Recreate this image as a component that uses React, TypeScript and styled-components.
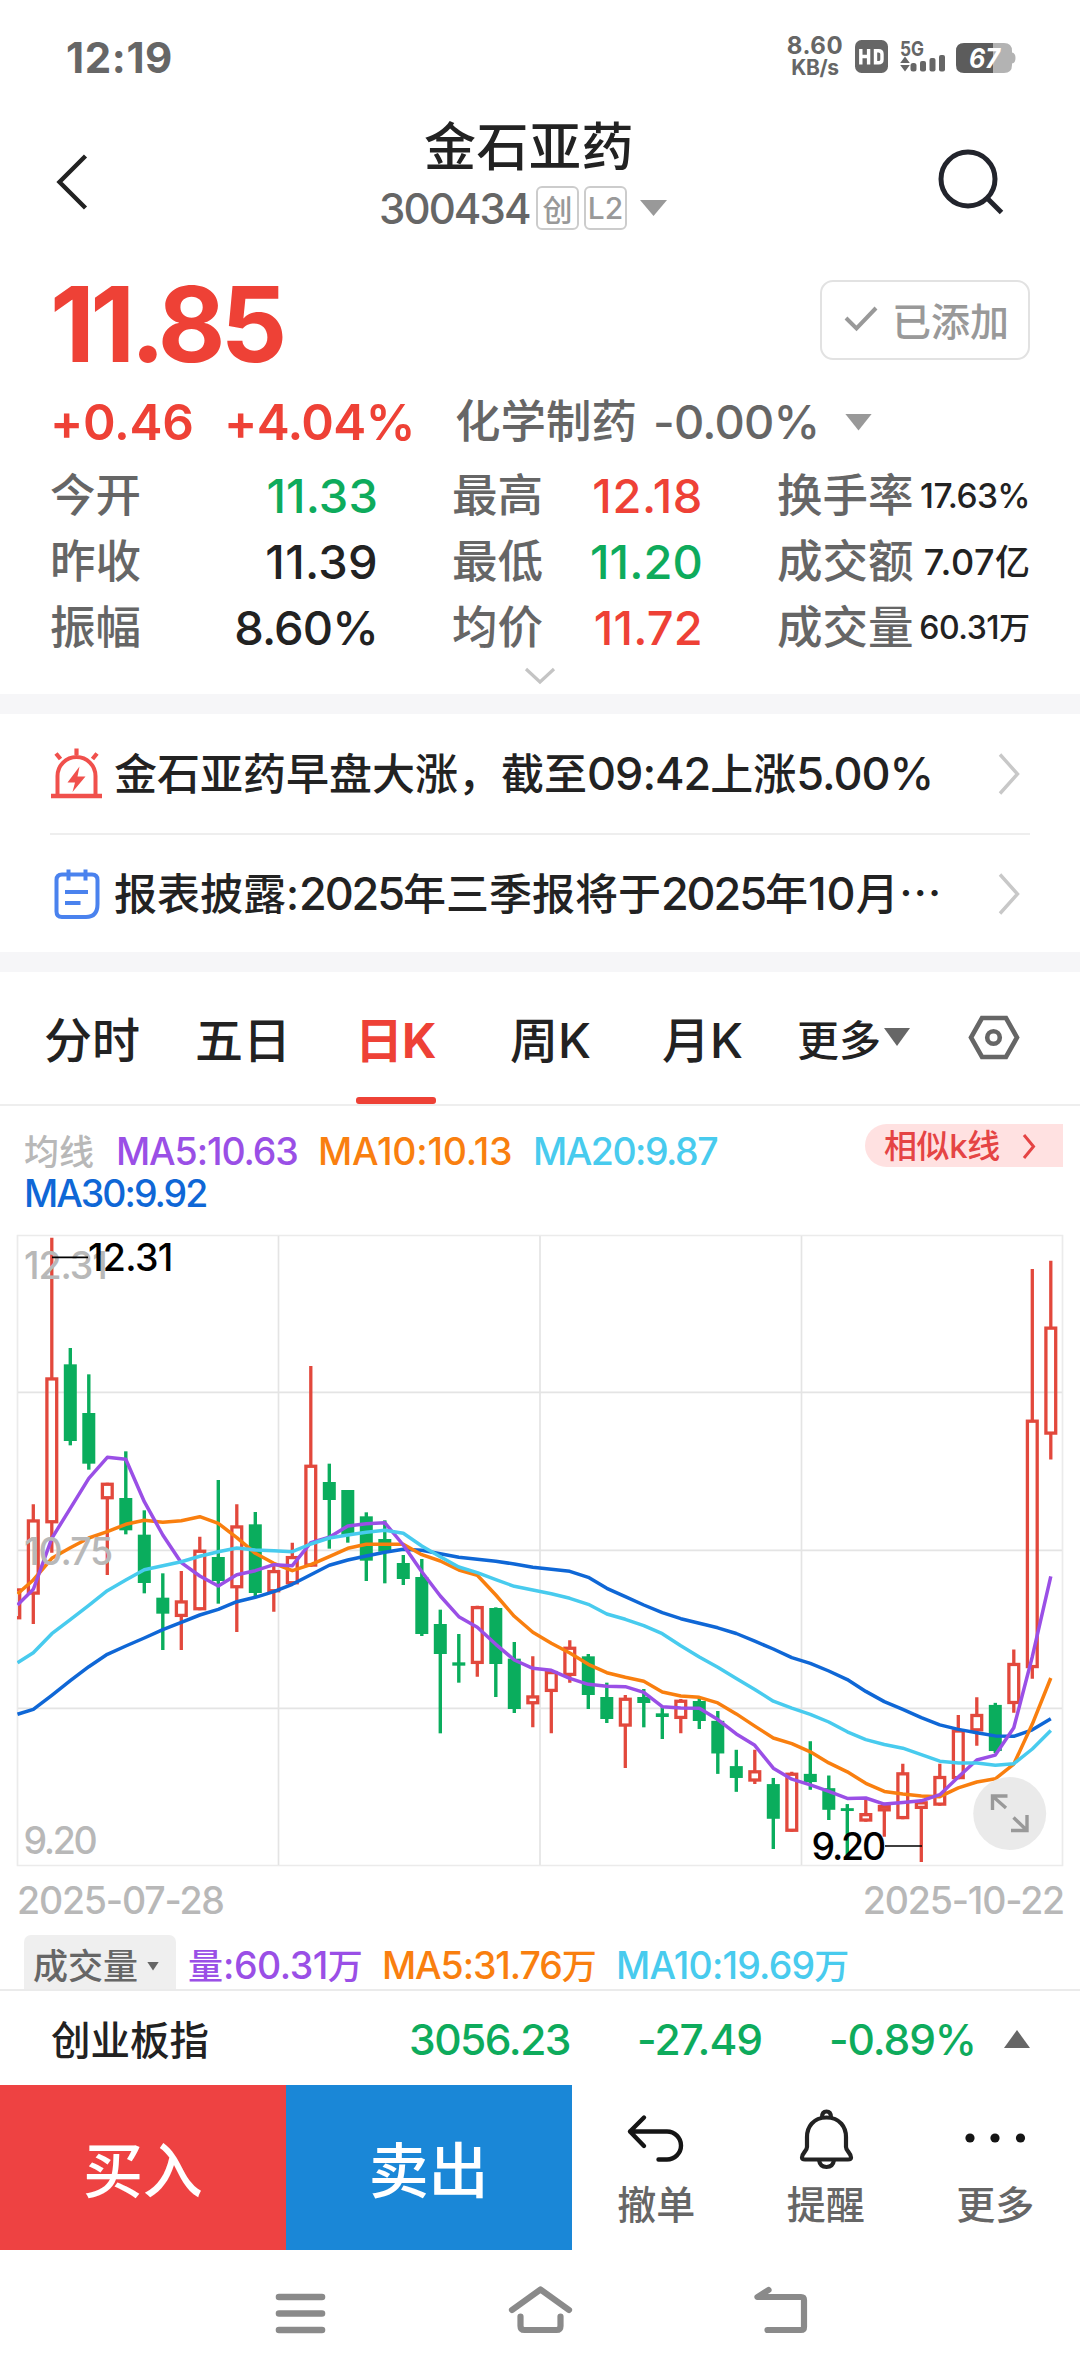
import React from 'react';
import styled, { createGlobalStyle } from 'styled-components';

const RED = '#ee4136';
const GREEN = '#0eab5c';
const INK = '#222222';
const GRAY = '#666666';
const MUTED = '#b8b8b8';
const PURPLE = '#9a4fe6';
const ORANGE = '#f97f0f';
const CYAN = '#48cbee';
const BLUE = '#0f67d6';

const GlobalStyle = createGlobalStyle`
  * { box-sizing: border-box; }
  body {
    margin: 0;
    background: #fff;
    color: ${INK};
    font-family: Inter, "Noto Sans CJK SC", sans-serif;
  }
  svg { display: block; }
`;

const Screen = styled.main`
  display: flex;
  flex-direction: column;
  width: 1080px;
  height: 2376px;
  overflow: hidden;
  background: #fff;
`;

/* Latin digits and letters, with their own size and tracking */
const Num = styled.span<{ $size?: number; $track?: number; $color?: string; $weight?: number }>`
  font-size: ${(p) => (p.$size ? `${p.$size}px` : 'inherit')};
  letter-spacing: ${(p) => p.$track ?? 0}px;
  color: ${(p) => p.$color ?? 'inherit'};
  font-weight: ${(p) => p.$weight ?? 'inherit'};
  white-space: nowrap;
`;

/* ---------- status bar ---------- */
const StatusBar = styled.div`
  display: flex;
  align-items: center;
  justify-content: space-between;
  height: 114px;
  padding: 0 64px 0 66px;
  color: ${GRAY};
`;
const Clock = styled.div`
  font-size: 42px;
  font-weight: 700;
  letter-spacing: 0.6px;
`;
const StatusIcons = styled.div`
  display: flex;
  align-items: center;
`;
const NetSpeed = styled.div`
  display: flex;
  flex-direction: column;
  align-items: center;
  width: 58px;
  margin-right: 11px;
  font-weight: 700;
  font-size: 24px;
  line-height: 22px;
  letter-spacing: 0.6px;
`;
const NetUnit = styled.span`
  font-size: 21px;
  letter-spacing: -0.4px;
`;

/* ---------- header ---------- */
const Header = styled.header`
  display: grid;
  grid-template-columns: 379px 322px 1fr;
  height: 137px;
`;
const BackCell = styled.div`
  padding: 38px 0 0 52px;
`;
const SearchCell = styled.div`
  display: flex;
  justify-content: flex-end;
  padding: 32px 74px 0 0;
`;
const Title = styled.h1`
  margin: 0;
  padding: 1px 0 0 45px;
  font-size: 52px;
  line-height: 66px;
  font-weight: 500;
  letter-spacing: 0.5px;
`;
const CodeRow = styled.div`
  display: flex;
  align-items: center;
  height: 54px;
  color: ${GRAY};
`;
const Code = styled.span`
  width: 157px;
  font-size: 42px;
  font-weight: 450;
  letter-spacing: -1.9px;
`;
const Badge = styled.span`
  display: flex;
  align-items: center;
  justify-content: center;
  width: 43px;
  height: 44px;
  margin-right: 5px;
  border: 2px solid #ccc;
  border-radius: 6px;
  color: #999;
  font-size: 30px;
  font-weight: 450;
`;
const Triangle = styled.i<{ $w: number; $h: number; $color: string; $up?: boolean; $left?: number }>`
  width: ${(p) => p.$w}px;
  height: ${(p) => p.$h}px;
  margin-left: ${(p) => p.$left ?? 0}px;
  background: ${(p) => p.$color};
  clip-path: ${(p) => (p.$up ? 'polygon(50% 0, 100% 100%, 0 100%)' : 'polygon(0 0, 100% 0, 50% 100%)')};
`;

/* ---------- quote ---------- */
const Quote = styled.section`
  height: 443px;
  padding: 24px 50px 0 50px;
`;
const PriceRow = styled.div`
  display: flex;
  justify-content: space-between;
  align-items: flex-start;
`;
const Price = styled.div`
  color: ${RED};
  font-size: 104px;
  line-height: 98px;
  font-weight: 700;
  letter-spacing: -4.6px;
`;
const AddedButton = styled.button`
  display: flex;
  align-items: center;
  width: 210px;
  height: 80px;
  margin-top: 5px;
  padding: 0 0 2px 22px;
  border: 2px solid #e2e2e2;
  border-radius: 13px;
  background: #fff;
  color: #999;
  font: 500 39px Inter, "Noto Sans CJK SC", sans-serif;
  gap: 14px;
`;
const ChangeRow = styled.div`
  display: grid;
  grid-template-columns: 174px 231px 198px 186px auto;
  align-items: center;
  height: 66px;
  margin-top: 16px;
  font-size: 45.5px;
  line-height: 66px;
  color: ${GRAY};
`;
const SectorName = styled.span`
  font-weight: 500;
`;
const Stats = styled.div`
  display: grid;
  grid-template-columns: 328px 251px 253px;
  column-gap: 74px;
  grid-auto-rows: 66px;
  margin-top: 8px;
`;
const Stat = styled.div`
  display: flex;
  justify-content: space-between;
  align-items: center;
  line-height: 66px;
  white-space: nowrap;
`;
const StatLabel = styled.span`
  color: ${GRAY};
  font-size: 45.5px;
  font-weight: 500;
`;
const StatValue = styled.span<{ $size: number; $track: number; $color: string }>`
  font-size: ${(p) => p.$size}px;
  letter-spacing: ${(p) => p.$track}px;
  color: ${(p) => p.$color};
  font-weight: 450;
`;
const Unit = styled.span<{ $size: number }>`
  font-size: ${(p) => p.$size}px;
  font-weight: 500;
  letter-spacing: 0;
`;
const Expand = styled.div`
  display: flex;
  justify-content: center;
  margin-top: 5px;
`;
const Divider = styled.div<{ $h: number }>`
  flex: none;
  height: ${(p) => p.$h}px;
  background: #f6f6f8;
`;

/* ---------- news ---------- */
const News = styled.section`
  height: 238px;
  padding: 0 50px;
`;
const NewsRow = styled.div<{ $h: number; $line?: boolean }>`
  display: flex;
  align-items: center;
  height: ${(p) => p.$h}px;
  border-bottom: ${(p) => (p.$line ? '2px solid #eeeeee' : 'none')};
`;
const NewsIcon = styled.div`
  width: 64px;
`;
const NewsText = styled.div`
  flex: 1;
  font-size: 43px;
  line-height: 60px;
  white-space: nowrap;
  font-weight: 500;
`;
const Ellipsis = styled.span`
  font-family: "Noto Sans CJK SC", sans-serif;
  font-size: 43px;
  line-height: 1;
`;
const ChevronCell = styled.div`
  padding-right: 9px;
`;

/* ---------- tabs ---------- */
const Tabs = styled.nav`
  display: grid;
  grid-template-columns: 151px 160px 155px 152px 135px 171px auto;
  height: 134px;
  padding-left: 44px;
  border-bottom: 2px solid #eeeeee;
`;
const Tab = styled.div<{ $active?: boolean }>`
  position: relative;
  display: flex;
  align-items: center;
  height: 134px;
  padding-bottom: 4px;
  color: ${(p) => (p.$active ? RED : INK)};
  font-size: 48px;
  font-weight: ${(p) => (p.$active ? 700 : 500)};
  letter-spacing: ${(p) => (p.$active ? -1 : 0)}px;
  &::after {
    content: "";
    display: ${(p) => (p.$active ? 'block' : 'none')};
    position: absolute;
    left: 1px;
    bottom: 2px;
    width: 80px;
    height: 7px;
    border-radius: 3px;
    background: ${RED};
  }
`;
const MoreTab = styled(Tab)`
  font-size: 42px;
  font-weight: 500;
`;

/* ---------- averages legend ---------- */
const Legend = styled.div`
  display: flex;
  justify-content: space-between;
  align-items: flex-start;
  height: 119px;
  padding: 18px 17px 0 24px;
`;
const LegendGrid = styled.div`
  display: grid;
  grid-template-columns: 92px 202px 215px 200px;
  grid-auto-rows: 42px;
  padding-top: 7px;
  line-height: 42px;
`;
const LegendItem = styled.span<{ $color: string; $track: number }>`
  color: ${(p) => p.$color};
  font-size: 37.5px;
  font-weight: 450;
  letter-spacing: ${(p) => p.$track}px;
  white-space: nowrap;
`;
const LegendName = styled.span`
  color: ${MUTED};
  font-size: 35px;
  font-weight: 500;
`;
const SimilarPill = styled.div`
  display: flex;
  align-items: center;
  gap: 22px;
  width: 198px;
  height: 43px;
  padding: 2px 0 0 19px;
  border-radius: 22px 0 0 22px;
  background: #ffe1e1;
  color: #e54444;
  font-size: 33px;
  font-weight: 500;
  line-height: 41px;
  letter-spacing: -0.4px;
  white-space: nowrap;
`;

/* ---------- chart ---------- */
const ChartBox = styled.div`
  height: 650px;
`;
const Dates = styled.div`
  display: flex;
  justify-content: space-between;
  height: 60px;
  padding: 0 16px 0 17px;
  color: ${MUTED};
  font-size: 37.5px;
  font-weight: 450;
  line-height: 52px;
  letter-spacing: -1.2px;
`;
const Indicators = styled.div`
  display: grid;
  grid-template-columns: 164px 194px 234px auto;
  height: 56px;
  padding-left: 24px;
  border-bottom: 2px solid #ebebeb;
  font-size: 35px;
  font-weight: 500;
  line-height: 62px;
`;
const IndicatorTab = styled.div`
  display: flex;
  align-items: center;
  width: 152px;
  height: 54px;
  padding: 8px 0 0 9px;
  border-radius: 7px 7px 0 0;
  background: #efefef;
  color: ${GRAY};
`;
const Indicator = styled.div<{ $color: string }>`
  color: ${(p) => p.$color};
  white-space: nowrap;
`;

/* ---------- bottom ---------- */
const IndexRow = styled.div`
  display: grid;
  grid-template-columns: 358px 228px 192px 175px auto;
  align-items: center;
  height: 94px;
  padding: 2px 0 0 51px;
`;
const IndexName = styled.span`
  padding-bottom: 4px;
  font-size: 39.5px;
  font-weight: 500;
`;
const TradeBar = styled.div`
  display: flex;
  height: 165px;
`;
const TradeButton = styled.button<{ $bg: string }>`
  width: 286px;
  height: 165px;
  padding: 0 0 2px;
  border: 0;
  background: ${(p) => p.$bg};
  color: #fff;
  font: 500 60px Inter, "Noto Sans CJK SC", sans-serif;
`;
const Actions = styled.div`
  display: grid;
  grid-template-columns: repeat(3, 169.5px);
`;
const Action = styled.div`
  display: flex;
  flex-direction: column;
  align-items: center;
  padding-top: 20px;
  color: ${GRAY};
  font-size: 39px;
  font-weight: 500;
  line-height: 52px;
`;
const ActionIcon = styled.div`
  height: 74px;
`;
const NavBar = styled.div`
  display: grid;
  grid-template-columns: 233px 230px auto;
  height: 126px;
  padding: 30px 0 0 272px;
`;

/* ---------- chart data ---------- */
type Candle = [high: number, top: number, bottom: number, low: number, up: 0 | 1];
const zone = (origin: number, scale: number, v: number) => origin + v / scale;
const candleZone = (origin: number, scale: number, rows: Candle[]): Candle[] =>
  rows.map(([h, t, b, l, u]) => [
    zone(origin, scale, h), zone(origin, scale, t), zone(origin, scale, b), zone(origin, scale, l), u,
  ]);
const candles: Candle[] = [
  ...candleZone(1220, 3, [
    [1105, 1105, 1198, 1198, 1], [853, 898, 1124, 1212, 1], [53, 472, 910, 998, 1], [384, 433, 663, 676, 0],
    [463, 579, 731, 749, 0], [788, 788, 838, 1065, 1], [694, 834, 931, 943, 0], [871, 944, 1089, 1120, 0],
    [1060, 1133, 1181, 1290, 0], [1053, 1141, 1191, 1290, 1], [950, 989, 1171, 1171, 1], [780, 1011, 1083, 1151, 0],
    [853, 916, 1105, 1236, 1], [876, 913, 1119, 1133, 0], [1035, 1050, 1117, 1175, 1], [968, 1008, 1093, 1093, 1],
    [438, 734, 1040, 1040, 1], [731, 786, 840, 986, 0], [810, 810, 945, 968, 0],
  ]),
  ...candleZone(1340, 3, [
    [517, 529, 662, 723, 0], [541, 597, 635, 730, 0], [645, 669, 717, 735, 0], [657, 711, 882, 888, 0],
    [809, 852, 942, 1180, 0], [882, 967, 977, 1028, 0], [797, 798, 972, 1010, 1], [802, 804, 972, 1071, 0],
    [906, 956, 1107, 1119, 0], [949, 1066, 1093, 1162, 1], [990, 993, 1056, 1180, 1], [901, 920, 1008, 1028, 1],
    [942, 949, 1065, 1107, 0], [1028, 1071, 1137, 1149, 0], [1065, 1073, 1160, 1284, 1], [1047, 1071, 1089, 1162, 0],
    [1100, 1120, 1131, 1197, 0], [1077, 1079, 1137, 1180, 1], [1071, 1083, 1143, 1167, 0],
  ]),
  ...candleZone(1220, 2.45, [
    [1203, 1227, 1307, 1357, 0], [1298, 1338, 1367, 1401, 0], [1298, 1348, 1376, 1382, 1], [1367, 1382, 1467, 1541, 0],
    [1352, 1354, 1499, 1499, 1], [1277, 1357, 1377, 1396, 0], [1361, 1392, 1445, 1470, 0], [1431, 1441, 1448, 1556, 0],
    [1420, 1453, 1474, 1474, 1], [1430, 1433, 1449, 1511, 1], [1332, 1353, 1468, 1468, 1], [1420, 1424, 1443, 1573, 1],
    [1332, 1362, 1435, 1435, 1], [1213, 1248, 1370, 1370, 1], [1169, 1210, 1253, 1288, 1], [1183, 1188, 1301, 1306, 0],
    [1052, 1085, 1186, 1207, 1], [120, 489, 1098, 1124, 1], [100, 261, 526, 587, 1],
  ]),
];
const candleX = (i: number) => 14.8 + 18.5 * i;

const line = (a: number[], b: number[], c: number[]) =>
  [...a.map((v) => zone(1220, 3, v)), ...b.map((v) => zone(1340, 3, v)), ...c.map((v) => zone(1220, 2.45, v))]
    .map((y, i) => `${i === 0 ? 17.5 : candleX(i).toFixed(1)},${y.toFixed(1)}`)
    .join(' ');

const averages = [
  { color: BLUE, points: line(
    [1483, 1468, 1426, 1382, 1340, 1303, 1278, 1254, 1229, 1207, 1185, 1168, 1145, 1132, 1115, 1093, 1064, 1036, 1020],
    [648, 637, 628, 631, 641, 652, 658, 664, 672, 682, 688, 694, 712, 745, 770, 795, 818, 836, 850],
    [999, 1013, 1032, 1051, 1072, 1086, 1105, 1126, 1155, 1180, 1199, 1219, 1237, 1248, 1256, 1264, 1265, 1249, 1222]) },
  { color: ORANGE, points: line(
    [1122, 1080, 1015, 983, 954, 935, 913, 901, 907, 902, 890, 910, 953, 1000, 1030, 1052, 1034, 1010, 985],
    [613, 613, 613, 644, 663, 690, 706, 765, 829, 877, 910, 939, 973, 998, 1012, 1024, 1056, 1068, 1072],
    [1183, 1210, 1240, 1269, 1283, 1303, 1330, 1352, 1380, 1400, 1406, 1411, 1413, 1391, 1377, 1369, 1333, 1235, 1122]) },
  { color: PURPLE, points: line(
    [1155, 1108, 955, 865, 775, 712, 718, 845, 945, 1028, 1068, 1098, 1064, 1052, 1034, 1037, 968, 952, 918],
    [551, 548, 615, 695, 768, 830, 862, 913, 960, 985, 991, 1015, 1033, 1039, 1040, 1057, 1100, 1104, 1105],
    [1224, 1259, 1287, 1343, 1370, 1384, 1400, 1417, 1416, 1431, 1427, 1423, 1408, 1365, 1323, 1311, 1244, 1070, 873]) },
  { color: CYAN, points: line(
    [1328, 1298, 1241, 1199, 1156, 1112, 1080, 1049, 1037, 1025, 1009, 995, 984, 990, 992, 995, 972, 954, 945],
    [577, 571, 580, 618, 650, 681, 698, 719, 739, 750, 761, 775, 793, 822, 838, 857, 881, 917, 951],
    [1096, 1123, 1150, 1179, 1196, 1211, 1230, 1254, 1273, 1285, 1294, 1310, 1326, 1330, 1330, 1336, 1332, 1296, 1251]) },
];

const AxisText = styled.text<{ $dark?: boolean }>`
  font-size: 37.5px;
  font-weight: 450;
  fill: ${(p) => (p.$dark ? '#000' : MUTED)};
`;

function CandleShape({ x, data }: { x: number; data: Candle }) {
  const [high, top, bottom, low, up] = data;
  if (!up) {
    return (
      <g fill="#0aad5d">
        <rect x={x - 1.7} y={high} width={3.4} height={low - high} />
        <rect x={x - 6.5} y={top} width={13} height={bottom - top} />
      </g>
    );
  }
  return (
    <g fill="none" stroke="#e2483c" strokeWidth={3.3}>
      <path d={`M${x} ${high}V${top + 1}M${x} ${bottom - 1}V${low}`} />
      <rect x={x - 4.9} y={top + 1.6} width={9.8} height={Math.max(bottom - top - 3.2, 1)} />
    </g>
  );
}

function Chart() {
  return (
    <svg width="1080" height="650" viewBox="0 1225 1080 650">
      <defs>
        <clipPath id="plot"><rect x="17" y="1235" width="1046" height="631" /></clipPath>
      </defs>
      <g stroke="#e4e4e4" strokeWidth="1.7" fill="none">
        <path d="M17.5 1235.5H1062.5V1865.5H17.5Z" stroke="#ebebeb" />
        <path d="M278.5 1236V1865M540 1236V1865M801.5 1236V1865M18 1392.3H1062M18 1550.3H1062M18 1708.3H1062" />
      </g>
      <g clipPath="url(#plot)">
        {candles.map((c, i) => <CandleShape key={i} x={candleX(i)} data={c} />)}
        {averages.map((a) => (
          <polyline key={a.color} points={a.points} fill="none" stroke={a.color} strokeWidth="3.5" strokeLinejoin="round" />
        ))}
      </g>
      <AxisText x="24" y="1278.5" letterSpacing="-1.1">12.31</AxisText>
      <AxisText x="24" y="1565" letterSpacing="-1.1">10.75</AxisText>
      <AxisText x="23.5" y="1853.5" letterSpacing="-2.4">9.20</AxisText>
      <path d="M52 1257.3H88M885 1846H922" stroke="#000" strokeWidth="1.7" />
      <AxisText $dark x="88" y="1271" letterSpacing="-0.7">12.31</AxisText>
      <AxisText $dark x="811.5" y="1860" letterSpacing="-2.2">9.20</AxisText>
      <circle cx="1009.7" cy="1813.5" r="36.5" fill="#e8e8e8" fillOpacity="0.93" />
      <path
        d="M992.5 1810V1796H1007.5M993 1796.5L1006 1808M1011 1830.5H1027V1815M1013.5 1817.5L1026.5 1830"
        fill="none" stroke="#999" strokeWidth="3.4"
      />
    </svg>
  );
}

function Chevron() {
  return (
    <svg width="24" height="44" viewBox="0 0 24 44" fill="none" stroke="#c8c8c8" strokeWidth="3.4">
      <path d="M3 2.5L20.5 22L3 41.5" />
    </svg>
  );
}

const stats: { label: string; value: string; unit?: string; size: number; track: number; color: string }[] = [
  { label: '今开', value: '11.33', size: 47, track: 0.1, color: GREEN },
  { label: '最高', value: '12.18', size: 47, track: 0.6, color: RED },
  { label: '换手率', value: '17.63%', size: 33.5, track: -0.6, color: INK },
  { label: '昨收', value: '11.39', size: 47, track: 0.3, color: INK },
  { label: '最低', value: '11.20', size: 47, track: 0.1, color: GREEN },
  { label: '成交额', value: '7.07', unit: '亿', size: 36, track: 0.5, color: INK },
  { label: '振幅', value: '8.60%', size: 47, track: -0.9, color: INK },
  { label: '均价', value: '11.72', size: 47, track: 0.2, color: RED },
  { label: '成交量', value: '60.31', unit: '万', size: 32, track: -0.5, color: INK },
];

export default function App() {
  return (
    <Screen>
      <GlobalStyle />
      <StatusBar>
        <Clock>12:19</Clock>
        <StatusIcons>
          <NetSpeed>
            <span>8.60</span>
            <NetUnit>KB/s</NetUnit>
          </NetSpeed>
          <svg width="161" height="50" viewBox="854 33 161 50">
            <rect x="854" y="41" width="33" height="33" rx="6.5" fill="#666" />
            <path d="M859.8 50V65.5M859.8 57.5H867.6M867.6 50V65.5M874.5 51.7H877.5Q881 51.7 881 55V60.5Q881 63.8 877.5 63.8H874.5Z" fill="none" stroke="#fff" strokeWidth="3.4" />
            <text x="899" y="57" fontSize="20" fontWeight="700" fill="#666" textLength="24" lengthAdjust="spacingAndGlyphs">5G</text>
            <path d="M904 57.5L908.8 64H899.2ZM904 72.5L908.8 66H899.2Z" fill="#666" />
            <g fill="#666">
              <rect x="909.5" y="64" width="6" height="8.5" rx="2.5" />
              <rect x="919" y="62" width="6" height="10.5" rx="2" />
              <rect x="928.5" y="59" width="6" height="13.5" rx="2" />
              <rect x="938" y="56" width="6" height="16.5" rx="2" />
            </g>
            <path d="M992 44H1003Q1011 44 1011 52V53.5Q1014.5 54 1014.5 59T1011 64.5V66Q1011 74 1003 74H992Z" fill="#b3b3b3" />
            <path d="M963 44H992V74H963Q955 74 955 66V52Q955 44 963 44Z" fill="#5c5c5c" />
            <text x="968" y="69" fontSize="27" fontWeight="700" fontStyle="italic" fill="#fff" textLength="31" lengthAdjust="spacingAndGlyphs">67</text>
          </svg>
        </StatusIcons>
      </StatusBar>

      <Header>
        <BackCell>
          <svg width="40" height="60" viewBox="52 152 40 60" fill="none" stroke="#222" strokeWidth="4.4">
            <path d="M85.5 156L59.5 182L85.5 208" />
          </svg>
        </BackCell>
        <div>
          <Title>金石亚药</Title>
          <CodeRow>
            <Code>300434</Code>
            <Badge>创</Badge>
            <Badge>L2</Badge>
            <Triangle $w={27} $h={16} $color="#999" $left={8} />
          </CodeRow>
        </div>
        <SearchCell>
          <svg width="70" height="70" viewBox="936 146 70 70" fill="none" stroke="#22242c" strokeWidth="5">
            <circle cx="968" cy="179" r="27" />
            <path d="M987 198L1001.5 212.5" />
          </svg>
        </SearchCell>
      </Header>

      <Quote>
        <PriceRow>
          <Price>11.85</Price>
          <AddedButton>
            <svg width="34" height="28" viewBox="0 0 34 28" fill="none" stroke="#999" strokeWidth="4">
              <path d="M2 13L12.5 23.5L32 3" />
            </svg>
            已添加
          </AddedButton>
        </PriceRow>
        <ChangeRow>
          <Num $size={49.5} $track={-0.3} $color={RED} $weight={600}>+0.46</Num>
          <Num $size={49.5} $track={-0.6} $color={RED} $weight={600}>+4.04%</Num>
          <SectorName>化学制药</SectorName>
          <Num $size={47} $track={-0.8} $weight={450}>-0.00%</Num>
          <Triangle $w={27} $h={17} $color="#999" $left={6} />
        </ChangeRow>
        <Stats>
          {stats.map((s) => (
            <Stat key={s.label}>
              <StatLabel>{s.label}</StatLabel>
              <StatValue $size={s.size} $track={s.track} $color={s.color}>
                {s.value}
                {s.unit && <Unit $size={s.size - 1}>{s.unit}</Unit>}
              </StatValue>
            </Stat>
          ))}
        </Stats>
        <Expand>
          <svg width="34" height="20" viewBox="0 0 34 20" fill="none" stroke="#c4c4c4" strokeWidth="3.2">
            <path d="M3 3L17 16L31 3" />
          </svg>
        </Expand>
      </Quote>

      <Divider $h={20} />
      <News>
        <NewsRow $h={121} $line>
          <NewsIcon>
            <svg width="54" height="54" viewBox="50 746 54 54" fill="none" stroke="#f0504c" strokeWidth="4">
              <path d="M57.5 793V775A19 19 0 0 1 95.5 775V793" />
              <path d="M51 795H102" strokeWidth="4.6" />
              <path d="M76.5 747.5V754M56 752.5L60.5 758M97 752.5L92.5 758" strokeWidth="4.2" />
              <path d="M79.5 765.5L67.5 781.5H75L72.5 791L85.500 775.500H77.500Z" fill="#f0504c" stroke="none" />
            </svg>
          </NewsIcon>
          <NewsText>
            金石亚药早盘大涨，截至<Num $size={45} $track={-1} $weight={450}>09:42</Num>上涨<Num $size={45} $track={-1} $weight={450}>5.00%</Num>
          </NewsText>
          <ChevronCell><Chevron /></ChevronCell>
        </NewsRow>
        <NewsRow $h={117}>
          <NewsIcon>
            <svg width="54" height="54" viewBox="50 866 54 54" fill="none" stroke="#4a82ee" strokeWidth="4">
              <path d="M62 873.5H92Q97.5 873.5 97.5 879V903Q97.5 916 86 916H62Q56.5 916 56.5 910.5V879Q56.5 873.5 62 873.5Z" />
              <path d="M68.5 868.5V879.5M85.5 868.5V879.5M65 891H88M65 902H80.5" />
            </svg>
          </NewsIcon>
          <NewsText>
            报表披露:<Num $size={45} $track={-2.1} $weight={450}>2025</Num>年三季报将于<Num $size={45} $track={-2.1} $weight={450}>2025</Num>年<Num $size={45} $track={0} $weight={450}>10</Num>月<Ellipsis>…</Ellipsis>
          </NewsText>
          <ChevronCell><Chevron /></ChevronCell>
        </NewsRow>
      </News>
      <Divider $h={20} />

      <Tabs>
        <Tab>分时</Tab>
        <Tab>五日</Tab>
        <Tab $active>日K</Tab>
        <Tab>周K</Tab>
        <Tab>月K</Tab>
        <MoreTab>
          更多
          <Triangle $w={26} $h={18} $color={GRAY} $left={3} />
        </MoreTab>
        <Tab>
          <svg width="52" height="46" viewBox="968 1014 52 46" fill="none" stroke="#666" strokeWidth="4.6">
            <path d="M982 1018H1006L1017 1037.5L1006 1057H982L971 1037.5Z" />
            <circle cx="993.5" cy="1037.5" r="6.3" />
          </svg>
        </Tab>
      </Tabs>

      <Legend>
        <LegendGrid>
          <LegendName>均线</LegendName>
          <LegendItem $color={PURPLE} $track={-1.1}>MA5:10.63</LegendItem>
          <LegendItem $color={ORANGE} $track={-0.2}>MA10:10.13</LegendItem>
          <LegendItem $color={CYAN} $track={-1.5}>MA20:9.87</LegendItem>
          <LegendItem $color={BLUE} $track={-2}>MA30:9.92</LegendItem>
        </LegendGrid>
        <SimilarPill>
          相似k线
          <svg width="14" height="28" viewBox="0 0 14 28" fill="none" stroke="#e54444" strokeWidth="3">
            <path d="M2 2L11.5 13.5L2 25" />
          </svg>
        </SimilarPill>
      </Legend>

      <ChartBox><Chart /></ChartBox>

      <Dates>
        <span>2025-07-28</span>
        <span>2025-10-22</span>
      </Dates>

      <Indicators>
        <IndicatorTab>
          成交量
          <Triangle $w={12} $h={9} $color={GRAY} $left={9} />
        </IndicatorTab>
        <Indicator $color={PURPLE}>量<Num $size={37.5} $track={-0.5} $weight={450}>:60.31</Num>万</Indicator>
        <Indicator $color={ORANGE}><Num $size={37.5} $track={-1.1} $weight={450}>MA5:31.76</Num>万</Indicator>
        <Indicator $color={CYAN}><Num $size={37.5} $track={-0.8} $weight={450}>MA10:19.69</Num>万</Indicator>
      </Indicators>

      <IndexRow>
        <IndexName>创业板指</IndexName>
        <Num $size={42.5} $track={-1.5} $color={GREEN} $weight={450}>3056.23</Num>
        <Num $size={42.5} $track={-1} $color={GREEN} $weight={450}>-27.49</Num>
        <Num $size={42.5} $track={-1.1} $color={GREEN} $weight={450}>-0.89%</Num>
        <Triangle $w={26} $h={18} $color={GRAY} $up />
      </IndexRow>

      <TradeBar>
        <TradeButton $bg="#ee4242">买入</TradeButton>
        <TradeButton $bg="#1a87d7">卖出</TradeButton>
        <Actions>
          <Action>
            <ActionIcon>
              <svg width="64" height="64" viewBox="625 2105 64 64" fill="none" stroke="#151515" strokeWidth="4.4" strokeLinecap="round" strokeLinejoin="round">
                <path d="M645 2117.5L631 2131.5L645 2146M631 2131.5H668A14 14 0 0 1 668 2159.5H659.5" />
              </svg>
            </ActionIcon>
            撤单
          </Action>
          <Action>
            <ActionIcon>
              <svg width="64" height="66" viewBox="792 2105 64 66" fill="none" stroke="#222" strokeWidth="4.2" strokeLinejoin="round">
                <path d="M824.5 2117.5C811 2117.5 805 2127.5 805 2137V2147C805 2151 800 2153 800 2157.5Q800 2159.5 803 2159.5H846Q849 2159.5 849 2157.5C849 2153 844 2151 844 2147V2137C844 2127.5 838 2117.5 824.5 2117.5Z" />
                <path d="M820 2117.5Q820 2111.5 824.5 2111.5T829 2117.5M817 2160Q818 2167 824.5 2167T832 2160" />
              </svg>
            </ActionIcon>
            提醒
          </Action>
          <Action>
            <ActionIcon>
              <svg width="64" height="64" viewBox="962 2105 64 64" fill="#151515">
                <circle cx="969" cy="2138" r="4.6" />
                <circle cx="994" cy="2138" r="4.6" />
                <circle cx="1019.5" cy="2138" r="4.6" />
              </svg>
            </ActionIcon>
            更多
          </Action>
        </Actions>
      </TradeBar>

      <NavBar>
        <svg width="60" height="60" viewBox="272 2280 60 60" stroke="#8a8a8a" strokeWidth="6.6" strokeLinecap="round">
          <path d="M279 2297H322M279 2313.5H322M279 2330H322" />
        </svg>
        <svg width="74" height="60" viewBox="505 2280 74 60" fill="none" stroke="#8a8a8a" strokeWidth="6.2" strokeLinecap="round">
          <path d="M512 2310L540.5 2289.5L569 2310" strokeLinejoin="round" />
          <path d="M520.5 2316.5V2326Q520.5 2330 524.5 2330H556.5Q560.5 2330 560.5 2326V2316.5" />
        </svg>
        <svg width="80" height="60" viewBox="735 2280 80 60" fill="none" stroke="#8a8a8a" strokeWidth="6.2" strokeLinecap="round" strokeLinejoin="round">
          <path d="M768.5 2290L757.5 2297H801Q804 2297 804 2300V2327Q804 2330 801 2330H767.5" />
        </svg>
      </NavBar>
    </Screen>
  );
}
